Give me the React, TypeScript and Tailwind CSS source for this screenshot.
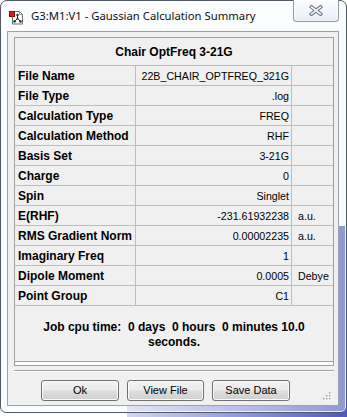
const rows: { label: string; value: string; unit?: string }[] = [
  { label: "File Name", value: "22B_CHAIR_OPTFREQ_321G" },
  { label: "File Type", value: ".log" },
  { label: "Calculation Type", value: "FREQ" },
  { label: "Calculation Method", value: "RHF" },
  { label: "Basis Set", value: "3-21G" },
  { label: "Charge", value: "0" },
  { label: "Spin", value: "Singlet" },
  { label: "E(RHF)", value: "-231.61932238", unit: "a.u." },
  { label: "RMS Gradient Norm", value: "0.00002235", unit: "a.u." },
  { label: "Imaginary Freq", value: "1" },
  { label: "Dipole Moment", value: "0.0005", unit: "Debye" },
  { label: "Point Group", value: "C1" },
];

function AppIcon() {
  return (
    <svg width="15" height="15" viewBox="0 0 15 15" className="mt-[3px] shrink-0">
      <path d="M3.5 1.5h7l3 3v9.5h-10z" fill="#fff" stroke="#6f6f6f" />
      <path d="M10.5 1.5v3h3" fill="none" stroke="#9a9a9a" />
      <line x1="8.5" y1="5" x2="8.5" y2="8.5" stroke="#333" />
      <line x1="8.5" y1="8.5" x2="5.5" y2="11.5" stroke="#333" />
      <line x1="8.5" y1="8.5" x2="11.5" y2="11.5" stroke="#333" />
      <circle cx="8.5" cy="5" r="1.2" fill="#222" />
      <circle cx="5.5" cy="11.5" r="1.2" fill="#222" />
      <circle cx="11.5" cy="11.5" r="1.2" fill="#222" />
      <circle cx="8.5" cy="8.5" r="1" fill="#222" />
      <rect x="0.5" y="1.5" width="5" height="5" fill="#e8141b" stroke="#8a0a0a" />
    </svg>
  );
}

function CloseGlyph() {
  return (
    <svg width="14" height="11" viewBox="0 0 14 11">
      <path d="M2.5 2l9 7M11.5 2l-9 7" stroke="#66727f" strokeWidth="3.6" strokeLinecap="square" />
      <path d="M2.5 2l9 7M11.5 2l-9 7" stroke="#f4f6f8" strokeWidth="1.6" strokeLinecap="square" />
    </svg>
  );
}

function SizeGrip() {
  return (
    <svg width="10" height="10" viewBox="0 0 10 10" className="absolute bottom-[4px] right-[6px]">
      {[
        [7, 1],
        [4, 4],
        [7, 4],
        [1, 7],
        [4, 7],
        [7, 7],
      ].map(([x, y]) => (
        <g key={`${x}-${y}`}>
          <rect x={x + 1} y={y + 1} width="1.5" height="1.5" fill="#fff" />
          <rect x={x} y={y} width="1.5" height="1.5" fill="#a3a3a3" />
        </g>
      ))}
    </svg>
  );
}

function DialogButton({ label, width }: { label: string; width: string }) {
  return (
    <button
      className={`${width} h-[21px] rounded-[3px] border border-[#707070] bg-[linear-gradient(to_bottom,#f2f2f2_0%,#ebebeb_48%,#dddddd_52%,#cfcfcf_100%)] text-[11px] leading-none text-black shadow-[inset_0_0_0_1px_#fcfcfc]`}
    >
      {label}
    </button>
  );
}

export default function App() {
  return (
    <div className="relative h-[417px] w-[347px] overflow-hidden bg-white font-['Liberation_Sans',Arial,sans-serif] text-black">
      {/* window behind, seen through the glass frame */}
      <div className="absolute bottom-0 left-[127px] right-0 top-[226px] bg-[linear-gradient(to_right,#d3d6f3,#8d94dc_55%,#4f58c2)]" />

      <div className="relative flex h-[413px] w-[347px] flex-col rounded-t-[7px] rounded-b-[6px] border border-[#4f5863] bg-[#f3f7fb]/40 shadow-[inset_0_0_0_1px_rgba(255,255,255,0.85)]">
        <div className="flex h-[30px] items-center pl-[8px]">
          <AppIcon />
          <span className="ml-[7px] font-['Noto_Sans',sans-serif] text-[11.3px] leading-[16px] text-[#111]">
            G3:M1:V1 - Gaussian Calculation Summary
          </span>
        </div>
        <div className="absolute right-[7px] top-[-1px] flex h-[22px] w-[46px] items-center justify-center rounded-b-[4px] border border-t-0 border-[#8c98a5] bg-[linear-gradient(to_bottom,#fbfdff,#e7eef5)] shadow-[inset_0_0_0_1px_rgba(255,255,255,0.7)]">
          <CloseGlyph />
        </div>

        <div className="relative ml-[6px] mr-[7px] flex h-[375px] flex-col border border-[#98a3ae] bg-[#f0f0f0]">
          <div className="ml-[6px] mt-[5px] w-[320px] border border-[#a0a0a0]">
            <div className="flex h-[28px] items-center justify-center border-b border-[#bdbdbd] text-[12px] font-bold">
              Chair OptFreq 3-21G
            </div>
            {rows.map((row) => (
              <div key={row.label} className="flex h-[20px] border-b border-[#bdbdbd]">
                <div className="flex w-[121px] items-center border-r border-[#bdbdbd] pl-[3px] text-[12px] font-bold">
                  {row.label}
                </div>
                <div className="flex w-[156px] items-center justify-end border-r border-[#bdbdbd] pr-[2px] text-[10.67px]">
                  {row.value}
                </div>
                <div className="flex flex-1 items-center pl-[6px] text-[10.67px]">{row.unit}</div>
              </div>
            ))}
            <div className="h-[56px] border-b border-[#a0a0a0] pt-[14px] text-center text-[12px] font-bold leading-[15px]">
              <div className="whitespace-pre">Job cpu time:  0 days  0 hours  0 minutes 10.0</div>
              <div>seconds.</div>
            </div>
            <div className="h-[3px] bg-white" />
          </div>

          <div className="ml-[6px] mt-[4px] h-[2px] w-[320px] border-b border-t border-white border-t-[#a0a0a0]" />

          <div className="ml-[33px] mt-[8px] flex gap-[8px]">
            <DialogButton label="Ok" width="w-[78px]" />
            <DialogButton label="View File" width="w-[77px]" />
            <DialogButton label="Save Data" width="w-[78px]" />
          </div>

          <SizeGrip />
        </div>
      </div>
    </div>
  );
}
